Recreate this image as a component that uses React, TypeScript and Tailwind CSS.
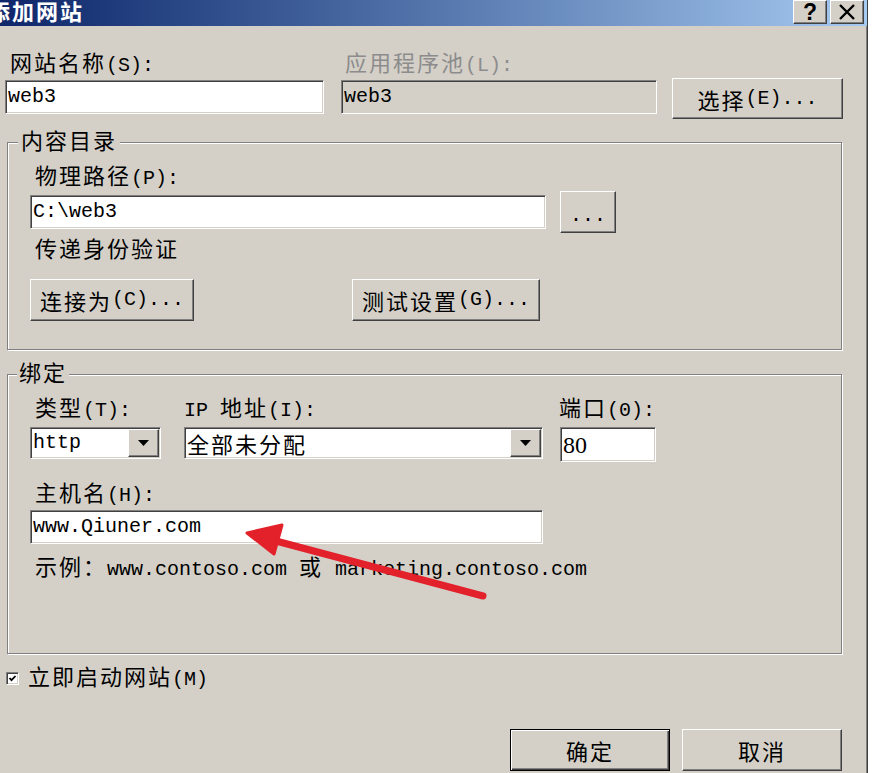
import type { ReactNode } from "react";

const CJK = /([\u3000-\u303f\u4e00-\u9fff\uff00-\uffef]+)/;

// Latin runs stay in the mono font, CJK runs get the CJK font at full width
function T({ s }: { s: string }) {
  return (
    <>
      {s.split(CJK).map((part, i) =>
        i % 2 ? (
          <span
            key={i}
            className="text-[22px] tracking-[2px] font-['Noto_Sans_CJK_SC',sans-serif]"
          >
            {part}
          </span>
        ) : (
          part
        ),
      )}
    </>
  );
}

const raised =
  "border border-t-white border-l-white border-r-[#404040] border-b-[#404040] shadow-[inset_-1px_-1px_0_#808080] bg-[#d4d0c8]";
const sunken =
  "border border-t-[#808080] border-l-[#808080] border-b-white border-r-white shadow-[inset_1px_1px_0_#404040,inset_-1px_-1px_0_#d4d0c8]";
const group =
  "ml-[2px] w-[835px] border border-[#808080] shadow-[inset_1px_1px_0_#fff,1px_1px_0_#fff]";

function Btn({ children, className = "" }: { children: ReactNode; className?: string }) {
  return (
    <div className={`${raised} flex items-center justify-center leading-none ${className}`}>
      {children}
    </div>
  );
}

function Field({ children, className = "" }: { children: ReactNode; className?: string }) {
  return (
    <div
      className={`${sunken} flex items-center pl-[2px] whitespace-nowrap overflow-hidden leading-none ${className}`}
    >
      {children}
    </div>
  );
}

function Select({ value, className = "" }: { value: string; className?: string }) {
  return (
    <div className={`${sunken} bg-white flex items-stretch p-[1px] ${className}`}>
      <div className="flex-1 flex items-center pl-[1px] leading-none whitespace-nowrap">
        <T s={value} />
      </div>
      <div className={`${raised} w-[31px] flex items-center justify-center`}>
        <svg width="11" height="6" viewBox="0 0 11 6">
          <path d="M0 0h11L5.5 6z" fill="#000" />
        </svg>
      </div>
    </div>
  );
}

function Label({ s, className = "" }: { s: string; className?: string }) {
  return (
    <div className={`h-[24px] leading-[18px] whitespace-nowrap ${className}`}>
      <T s={s} />
    </div>
  );
}

export default function App() {
  return (
    <div className="relative w-[879px] h-[773px] overflow-hidden bg-white font-['Liberation_Mono',monospace] text-[20px] text-black">
      <div className="w-[868px] h-full bg-[#d4d0c8] border-r border-r-[#404040] shadow-[inset_-1px_0_0_#808080]">
        {/* Title bar */}
        <div className="h-[26px] flex items-start justify-between pr-[3px] bg-linear-to-r from-[#0f266a] to-[#a6caf0]">
          <div className="-ml-[12px] text-white font-bold text-[22px] leading-[20px] tracking-[2px] font-['Noto_Sans_CJK_SC',sans-serif]">
            添加网站
          </div>
          <div className="flex gap-[3px]">
            <Btn className="w-[34px] h-[24px]">
              <span className="font-['Liberation_Sans',sans-serif] font-bold text-[23px] leading-[20px]">?</span>
            </Btn>
            <Btn className="w-[34px] h-[24px]">
              <svg width="18" height="16" viewBox="0 0 18 16">
                <path d="M2 1l14 14M16 1L2 15" stroke="#000" strokeWidth="2.4" />
              </svg>
            </Btn>
          </div>
        </div>

        <div className="pl-[5px]">
          {/* Site name / app pool */}
          <div className="flex items-start pt-[26px]">
            <div className="w-[319px]">
              <Label s="网站名称(S):" className="pl-[5px]" />
              <Field className="mt-[4px] h-[34px] bg-white">web3</Field>
            </div>
            <div className="ml-[17px] w-[316px]">
              <Label s="应用程序池(L):" className="pl-[4px] text-[#8c8c8c]" />
              <Field className="mt-[4px] h-[34px]">web3</Field>
            </div>
            <Btn className="ml-[15px] mt-[26px] w-[171px] h-[41px]">
              <T s="选择(E)..." />
            </Btn>
          </div>

          {/* Content directory */}
          <fieldset className={`${group} mt-[11px]`}>
            <legend className="ml-[10px] px-[3px] h-[24px] leading-[18px] bg-[#d4d0c8]">
              <T s="内容目录" />
            </legend>
            <div className="pl-[22px] pt-[11px] pb-[28px]">
              <Label s="物理路径(P):" className="pl-[5px]" />
              <div className="mt-[2px] flex items-center gap-[14px]">
                <Field className="w-[516px] h-[34px] bg-white">C:\web3</Field>
                <Btn className="w-[56px] h-[42px] pt-[8px]">...</Btn>
              </div>
              <Label s="传递身份验证" className="mt-[5px] pl-[5px]" />
              <div className="mt-[17px] flex">
                <Btn className="w-[164px] h-[42px]">
                  <T s="连接为(C)..." />
                </Btn>
                <Btn className="ml-[158px] w-[188px] h-[42px]">
                  <T s="测试设置(G)..." />
                </Btn>
              </div>
            </div>
          </fieldset>

          {/* Binding */}
          <fieldset className={`${group} mt-[12px]`}>
            <legend className="ml-[9px] px-[2px] h-[24px] leading-[18px] bg-[#d4d0c8]">
              <T s="绑定" />
            </legend>
            <div className="pl-[22px] pt-[11px] pb-[73px]">
              <div className="flex items-start">
                <div className="w-[131px]">
                  <Label s="类型(T):" className="pl-[5px]" />
                  <Select value="http" className="mt-[6px] h-[32px]" />
                </div>
                <div className="ml-[23px] w-[359px]">
                  <Label s="IP 地址(I):" />
                  <Select value="全部未分配" className="mt-[6px] h-[32px]" />
                </div>
                <div className="ml-[17px] w-[96px]">
                  <Label s="端口(0):" className="-ml-[1px]" />
                  <Field className="mt-[6px] h-[35px] bg-white font-['Liberation_Serif',serif] text-[24px]">
                    80
                  </Field>
                </div>
              </div>
              <Label s="主机名(H):" className="mt-[20px] pl-[5px]" />
              <Field className="mt-[4px] w-[513px] h-[34px] bg-white">www.Qiuner.com</Field>
              <Label
                s="示例：www.contoso.com 或 marketing.contoso.com"
                className="mt-[12px] pl-[5px]"
              />
            </div>
          </fieldset>

          {/* Start now */}
          <div className="mt-[12px] h-[24px] flex items-center">
            <div className={`${sunken} ml-[1px] w-[13px] h-[13px] bg-white flex items-center justify-center`}>
              <svg width="9" height="9" viewBox="0 0 9 9">
                <path d="M1.5 4l2 2.2L7.5 2" fill="none" stroke="#000" strokeWidth="1.8" />
              </svg>
            </div>
            <Label s="立即启动网站(M)" className="ml-[9px]" />
          </div>

          {/* OK / Cancel */}
          <div className="mt-[39px] w-[837px] flex justify-end gap-[12px]">
            <div className="w-[160px] h-[42px] border border-black bg-[#d4d0c8] flex items-center justify-center shadow-[inset_1px_1px_0_#fff,inset_-1px_-1px_0_#404040,inset_-2px_-2px_0_#808080]">
              <T s="确定" />
            </div>
            <Btn className="w-[160px] h-[42px]">
              <T s="取消" />
            </Btn>
          </div>
        </div>
      </div>

      {/* annotation arrow */}
      <svg className="absolute left-0 top-0 pointer-events-none" width="879" height="773">
        <line x1="276" y1="541" x2="483" y2="596" stroke="#e3212a" strokeWidth="7" strokeLinecap="round" />
        <polygon
          points="247,533 282,525 274,554"
          fill="#e3212a"
          stroke="#e3212a"
          strokeWidth="3"
          strokeLinejoin="round"
        />
      </svg>
    </div>
  );
}
